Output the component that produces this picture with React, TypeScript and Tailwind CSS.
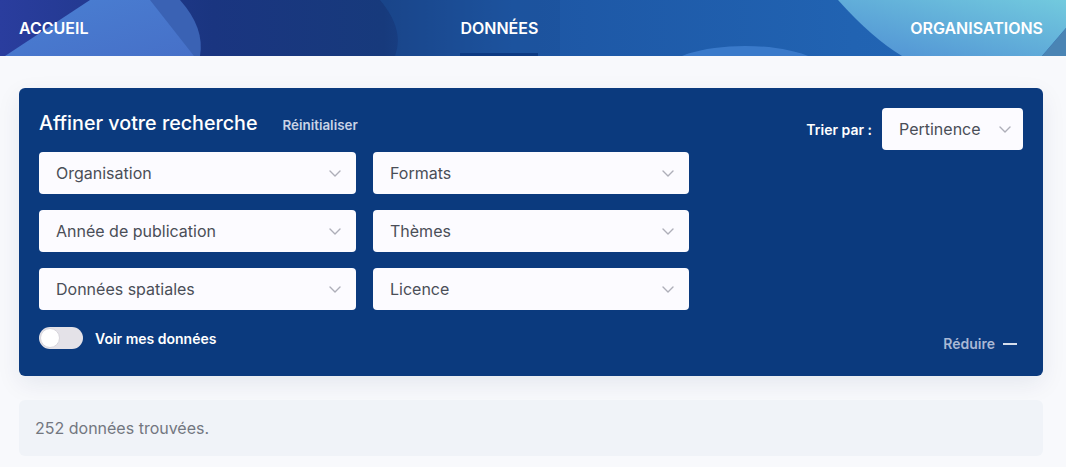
import React from "react";

function Chevron() {
  return (
    <svg width="12" height="7" viewBox="0 0 12 7" fill="none" className="shrink-0">
      <polyline points="1,1 6,6 11,1" stroke="#aeaeb8" strokeWidth="1.4" strokeLinecap="round" strokeLinejoin="round" />
    </svg>
  );
}

function Select({ label }: { label: string }) {
  return (
    <div className="flex h-[42px] items-center justify-between rounded-[4px] bg-[#fcfbff] pl-[17px] pr-[15px] text-[16px] text-[#4a4e57]">
      <span>{label}</span>
      <Chevron />
    </div>
  );
}

function HeaderBg() {
  return (
    <svg className="absolute inset-0 h-full w-full" viewBox="0 0 1066 56" preserveAspectRatio="none">
      <defs>
        <linearGradient id="base" x1="0" y1="0" x2="1" y2="0">
          <stop offset="0" stopColor="#2a3d9e" />
          <stop offset="0.2" stopColor="#1a3580" />
          <stop offset="0.36" stopColor="#173a7c" />
          <stop offset="0.48" stopColor="#1d56a4" />
          <stop offset="0.8" stopColor="#2163b2" />
          <stop offset="1" stopColor="#2468b6" />
        </linearGradient>
        <linearGradient id="light" x1="0" y1="1" x2="1" y2="0">
          <stop offset="0" stopColor="#4f8fd4" />
          <stop offset="1" stopColor="#72cade" />
        </linearGradient>
        <linearGradient id="leftl" x1="0" y1="0" x2="1" y2="1">
          <stop offset="0" stopColor="#4a7fd2" />
          <stop offset="1" stopColor="#4670c8" />
        </linearGradient>
      </defs>
      <rect width="1066" height="56" fill="url(#base)" />
      <path d="M380,0 Q405,30 395,56 L560,56 L560,0 Z" fill="#1c4f98" opacity="0.5" />
      <path d="M5,56 L90,0 L158,0 L196,56 Z" fill="url(#leftl)" />
      <path d="M150,0 L180,0 Q205,28 200,56 L194,56 Z" fill="#3a62b4" />
      <ellipse cx="745" cy="72" rx="80" ry="26" fill="#3f7fcf" opacity="0.85" />
      <path d="M838,0 Q872,38 902,56 L1042,56 L1066,28 L1066,0 Z" fill="url(#light)" />
      <path d="M1042,56 L1066,28 L1066,56 Z" fill="#4a84b4" />
    </svg>
  );
}

export default function App() {
  return (
    <div className="min-h-[467px] w-[1066px] bg-[#f8f9fc]" style={{ fontFamily: "Inter, 'Noto Sans', sans-serif" }}>
      <header className="relative h-[56px] overflow-hidden">
        <HeaderBg />
        <nav className="relative flex h-full items-center justify-between pl-[19px] pr-[23px] text-[16px] font-semibold uppercase text-white">
          <span>Accueil</span>
          <span className="relative flex h-full items-center">
            Données
            <span className="absolute bottom-0 left-0 right-0 h-[3px] bg-[#0d3a82]" />
          </span>
          <span>Organisations</span>
        </nav>
      </header>

      <main className="pl-[19px] pr-[23px] pt-[32px]">
        <section className="flex h-[288px] flex-col rounded-[6px] bg-[#0b3a7e] px-[20px] pt-[20px] shadow-[0_8px_24px_rgba(15,40,90,0.08)]">
          <div className="flex justify-between">
            <div className="w-[650px] pt-[3px]">
              <div className="flex h-[24px] items-baseline gap-[25px]">
                <h1 className="text-[19.7px] font-medium leading-[24px] text-white">Affiner votre recherche</h1>
                <button className="text-[13.4px] font-semibold text-[#c9d3e6]">Réinitialiser</button>
              </div>
              <div className="mt-[17px] grid grid-cols-[317px_316px] gap-x-[17px] gap-y-[16px]">
                <Select label="Organisation" />
                <Select label="Formats" />
                <Select label="Année de publication" />
                <Select label="Thèmes" />
                <Select label="Données spatiales" />
                <Select label="Licence" />
              </div>
            </div>
            <div className="flex h-[42px] items-center gap-[10px]">
              <span className="text-[14px] font-semibold text-white">Trier par :</span>
              <div className="flex h-[42px] w-[141px] items-center justify-between rounded-[4px] bg-[#fcfbff] pl-[17px] pr-[12px] text-[16px] text-[#4a4e57]">
                <span>Pertinence</span>
                <Chevron />
              </div>
            </div>
          </div>
          <div className="mt-[17px] flex items-start justify-between">
            <div className="flex items-center gap-[12px]">
              <div className="flex h-[22px] w-[44px] items-center rounded-full bg-[#e4e2e8] px-[1px]">
                <div className="h-[20px] w-[20px] rounded-full border border-[#d8d6dc] bg-white" />
              </div>
              <span className="text-[14px] font-semibold text-white">Voir mes données</span>
            </div>
            <button className="mr-[6px] mt-[6px] flex items-center gap-[8px] text-[14px] font-semibold text-[#a9b8d5]">
              Réduire
              <span className="block h-[2px] w-[14px] bg-[#d6deec]" />
            </button>
          </div>
        </section>

        <div className="mt-[24px] flex h-[56px] items-center rounded-[6px] bg-[#f0f3f8] pl-[16px] text-[16px] text-[#737780]">
          252 données trouvées.
        </div>
      </main>
    </div>
  );
}
